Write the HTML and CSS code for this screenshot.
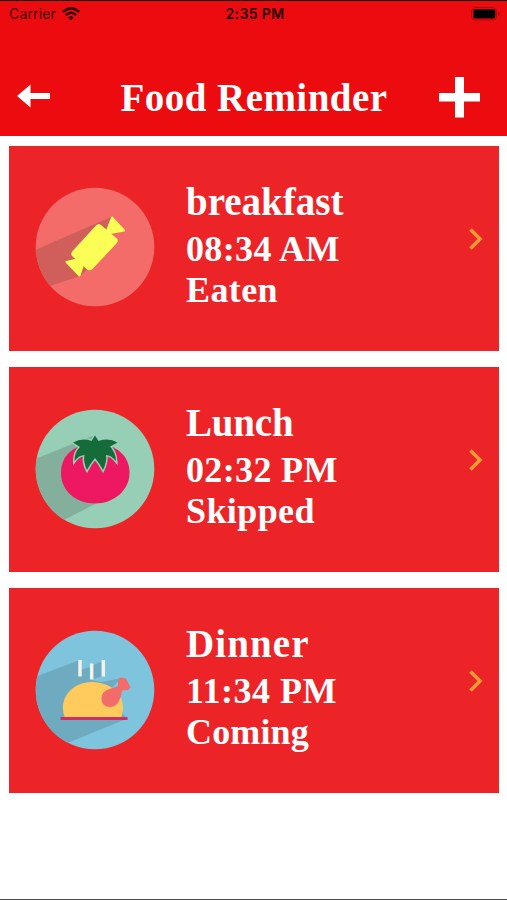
FILE: index.html
```html
<!DOCTYPE html>
<html lang="en">
<head>
<meta charset="utf-8">
<title>Food Reminder</title>
<link rel="stylesheet" href="styles.css">
</head>
<body>
<div class="screen">
  <header class="header">
    <div class="status">
      <div class="carrier"><span>Carrier</span>
        <svg width="18" height="14" viewBox="0 0 18 14" fill="none" stroke="#300000" stroke-width="2.5"><path d="M.9 4.9Q9-2.2 17.1 4.9M3.8 8.1Q9 3.5 14.2 8.1"/><path d="M6.2 10.5Q9 8.1 11.8 10.5L9 13.5Z" fill="#300000" stroke="none"/></svg>
      </div>
      <span class="clock">2:35 PM</span>
      <svg class="battery" width="30" height="14" viewBox="0 0 30 14"><rect x=".6" y=".6" width="25" height="12.4" rx="3.5" fill="none" stroke="#b0080b" stroke-width="1"/><rect x="2.3" y="2.3" width="22" height="9.2" rx="1.8"/><path d="M27.3 4.8q2.6 2 0 4z" fill="#900709"/></svg>
    </div>
    <nav class="nav">
      <svg class="back" width="34" height="24" viewBox="0 0 34 24" fill="#fff"><path d="M0 12 13.5.5V9H33v6H13.5v8.500Z"/></svg>
      <h1 class="title">Food Reminder</h1>
      <svg class="add" width="41" height="41" viewBox="0 0 41 41" fill="#fff"><path d="M16 0h9v16h16v8.500H25V40.500h-9V24.500H0V16h16z"/></svg>
    </nav>
  </header>
  <main class="list">
    <article class="card">
      <svg class="food" width="120" height="120" viewBox="0 0 120 120">
        <clipPath id="disc"><circle cx="60" cy="60" r="59.300"/></clipPath>
        <g clip-path="url(#disc)">
          <rect width="120" height="120" fill="#f36c69"/>
          <path d="M76 30 0 63V104L45 89 76 60z" fill="#d05f5b"/>
          <g fill="#fbff55" stroke="#fbff55" stroke-width="2" stroke-linejoin="round">
            <path d="M65 38.500 81 52Q82.500 53.500 81 55.500L57 81Q55 83 53 82L38 68.500Q36.500 67 38 65L62 39Q64 37.500 65 38.500Z"/>
            <path d="M77 30.500 89 43.500 75 46 72 43.500Z M31.500 75 42 72.500 48 78 44.500 88.500Z"/>
            <path d="M71 47 76 42M41 77 46 72" stroke-width="5"/>
          </g>
        </g>
      </svg>
      <div class="info">
        <h2 class="name">breakfast</h2>
        <p class="time am">08:34 AM</p>
        <p class="state eaten">Eaten</p>
      </div>
      <svg class="arrow" width="16" height="24" viewBox="0 0 16 24"><path d="M2.500 2.500 12 12 2.500 21.500" fill="none" stroke="#ff9a35" stroke-width="3.600"/></svg>
    </article>
    <article class="card">
      <svg class="food" width="120" height="120" viewBox="0 0 120 120">
        <g clip-path="url(#disc)">
          <rect width="120" height="120" fill="#96cfb5"/>
          <path d="M60 26 0 50V110L29 111 60 95z" fill="#83af9c"/>
          <path d="M60 35C82 35 94.500 47 94.500 64S79 94.500 60 94.500 26 82 26 64 39 35 60 35Z" fill="#ed1762"/>
          <path d="M60 26.500 63.500 32Q74 28.500 82.500 33.500L75 37.500Q80.500 43 81 52 76 46 71 46 72 53 68 61 65 55 60 49 55 55 52 61 48 53 49.500 46 44 46 39.500 52 39.500 43 45 38L38 33.500Q47 28.500 56.500 32Z" fill="#156c38" stroke="#96cfb5" stroke-width="3" stroke-linejoin="miter" paint-order="stroke"/>
        </g>
      </svg>
      <div class="info">
        <h2 class="name lunch">Lunch</h2>
        <p class="time pm">02:32 PM</p>
        <p class="state skipped">Skipped</p>
      </div>
      <svg class="arrow" width="16" height="24" viewBox="0 0 16 24"><path d="M2.500 2.500 12 12 2.500 21.500" fill="none" stroke="#ff9a35" stroke-width="3.600"/></svg>
    </article>
    <article class="card">
      <svg class="food" width="120" height="120" viewBox="0 0 120 120">
        <g clip-path="url(#disc)">
          <rect width="120" height="120" fill="#7ec4dc"/>
          <path d="M45 30 0 47V113L35 112 91 89 75 60 86 48 67 52 56 50V37L45 40zM68 31 56 36 56 50 68 46z" fill="#6eabc0"/>
          <path d="M45 30v16.500M56.700 33.500v16M68.300 30v16.500" stroke="#f1f2ea" stroke-width="3.500"/>
          <path d="M30 88C22 68 38 52 57 52S94 66 86 88Z" fill="#ffcb5d"/>
          <path d="M25.500 88.500H92.500" stroke="#cf2f63" stroke-width="3"/>
          <path d="M83 52Q83 49 86 47.500L91 48.500 95.500 57.500 93 60 87 60.500C86 67 84 77 75 77 69 77 66.500 73 66.500 69 66.500 59 76 59.500 83 56Z" fill="#f36c69"/>
        </g>
      </svg>
      <div class="info">
        <h2 class="name dinner">Dinner</h2>
        <p class="time eleven">11:34 PM</p>
        <p class="state coming">Coming</p>
      </div>
      <svg class="arrow" width="16" height="24" viewBox="0 0 16 24"><path d="M2.500 2.500 12 12 2.500 21.500" fill="none" stroke="#ff9a35" stroke-width="3.600"/></svg>
    </article>
  </main>
</div>
</body>
</html>
```
FILE: styles.css
```css
* { box-sizing: border-box; }
body, h1, h2, p { margin: 0; }
body { background: #fff; }
svg { display: block; flex: none; }

.screen {
  display: flex;
  flex-direction: column;
  height: 900px;
  overflow: hidden;
  border-bottom: 1px solid #4a4a4a;
}

.header {
  height: 136px;
  flex: none;
  background: #ec0c10;
  border-top: 1.500px solid #190000;
}

.status {
  display: grid;
  grid-template-columns: 1fr auto 1fr;
  align-items: center;
  height: 25px;
  padding: 0 6px 0 9px;
  font: 14px/25px Inter, "Liberation Sans", sans-serif;
  color: #400000;
}
.carrier { display: flex; align-items: center; gap: 6px; letter-spacing: 0.150px; }
.clock { font-weight: 600; color: #250000; letter-spacing: 0.400px; }
.battery { justify-self: end; }

.nav {
  display: flex;
  align-items: center;
  justify-content: space-between;
  height: 81px;
  margin-top: 31px;
  padding: 0 27px 0 17px;
}
.back { margin-bottom: 3px; }
.title, .name, .time, .state {
  font-family: Baskerville, "Liberation Serif", serif;
  font-weight: 700;
  color: #fff;
  white-space: nowrap;
}
.title { padding-top: 1px; font-size: 39px; line-height: 48px; letter-spacing: 0.450px; margin-left: 18px; }

.list {
  display: flex;
  flex-direction: column;
  gap: 16px;
  padding: 10px 8px 0 9px;
}
.card {
  display: flex;
  height: 205px;
  padding: 0 15px 0 26px;
  background: #ed2427;
}
.card + .card .food { margin-top: 42px; }
.food { margin-top: 41px; }
.info { flex: 1; padding: 32px 0 0 31px; }
.arrow { margin-top: 81px; }

.name { font-size: 39px; line-height: 48px; }
.time { font-size: 36px; line-height: 45px; padding-top: 1px; }
.state { font-size: 36px; line-height: 38px; margin-top: -1px; }
.lunch { letter-spacing: -0.200px; }
.dinner { letter-spacing: 1.100px; }
.am { letter-spacing: 0.350px; }
.pm { letter-spacing: 0.350px; }
.eleven { letter-spacing: 0.500px; }
.eaten { letter-spacing: 0.400px; }
.skipped { letter-spacing: 0.400px; }
.coming { letter-spacing: 0.150px; }
```
